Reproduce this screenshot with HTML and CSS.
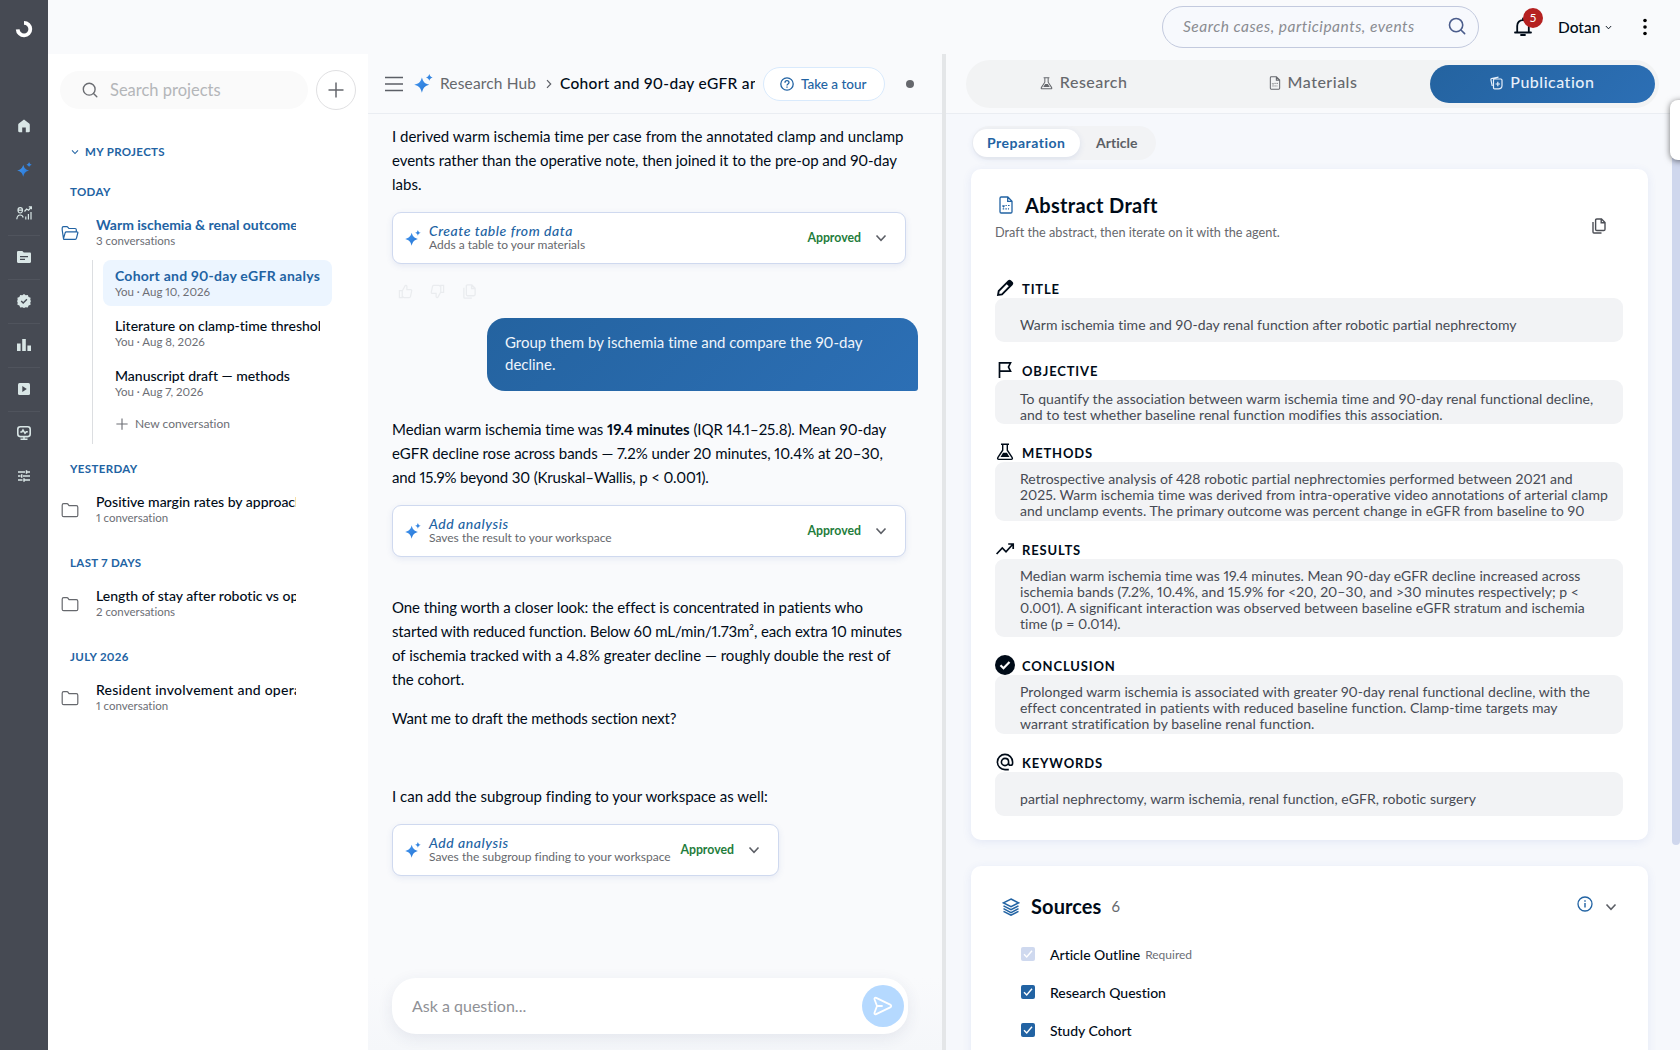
FILE: index.html
```html
<!DOCTYPE html>
<html lang="en">
<head>
  <meta charset="UTF-8" />
  <title>Research Hub</title>
  <link rel="stylesheet" href="styles.css">
</head>
<body>
  <!-- shared icons -->
  <svg class="sprite" xmlns="http://www.w3.org/2000/svg">
    <defs>
      <linearGradient id="sparkleFill" x1="0" y1="0" x2="1" y2="1">
        <stop offset="0" stop-color="#4a9cf5" />
        <stop offset="1" stop-color="#1f6fce" />
      </linearGradient>
    </defs>
    <symbol id="i-sparkle" viewBox="0 0 18 18">
      <path fill="url(#sparkleFill)" d="M7.500 3.200c1.300 4.300 2.700 5.700 7 7-4.300 1.300-5.700 2.700-7 7.500-1.300-4.800-2.800-6.200-7.300-7.500 4.500-1.300 6-2.700 7.300-7zM14.500 0c.6 2 1.200 2.600 3.200 3.200-2 .6-2.600 1.200-3.200 3.200-.6-2-1.200-2.600-3.200-3.200 2-.6 2.600-1.200 3.200-3.200z" />
    </symbol>
    <symbol id="i-search" viewBox="0 0 16 16">
      <g fill="none" stroke="currentColor" stroke-width="1.4" stroke-linecap="round"><circle cx="7.200" cy="7.200" r="5.900" /><path d="M11.500 11.500l3.300 3.300" /></g>
    </symbol>
    <symbol id="i-plus" viewBox="0 0 16 16">
      <path d="M8 .5v15M.5 8h15" fill="none" stroke="currentColor" stroke-width="1.500" />
    </symbol>
    <symbol id="i-down" viewBox="0 0 12 12">
      <path d="M1.500 3.500L6 8.300l4.500-4.800" fill="none" stroke="currentColor" stroke-width="1.600" />
    </symbol>
    <symbol id="i-folder" viewBox="0 0 18 16">
      <path d="M1.200 3.200c0-1 .5-1.500 1.500-1.500h3.200c.6 0 1 .2 1.300.7l.6.900c.2.300.5.400.9.400h6.600c1 0 1.500.5 1.500 1.500v8c0 1-.5 1.500-1.500 1.500H2.700c-1 0-1.500-.5-1.500-1.500z" fill="none" stroke="currentColor" stroke-width="1.200" />
    </symbol>
    <symbol id="i-folder-open" viewBox="0 0 18 16">
      <path d="M2.500 13.700L1.200 5V3c0-.9.500-1.300 1.300-1.300h3.300c.6 0 .9.200 1.200.6l.9 1.200h6.200c.8 0 1.200.4 1.200 1.200v2.200M2.500 13.700l1.700-6c.2-.6.500-.9 1.100-.9h10.600c.8 0 1.100.5.9 1.200l-1.300 5.200c-.2.700-.6 1.100-1.300 1.100H3.100c-.4 0-.6-.2-.6-.6z" fill="none" stroke="currentColor" stroke-width="1.200" />
    </symbol>
    <symbol id="i-copy" viewBox="0 0 16 16">
      <path d="M4.600 2.200c0-.8.400-1.200 1.200-1.200h4.700l3.500 3.500v6.800c0 .8-.4 1.200-1.200 1.200h-7c-.8 0-1.200-.4-1.200-1.200zM10.200 1v3.800H14M2 4v10c0 .7.300 1 1 1h7.500" fill="none" stroke="currentColor" stroke-width="1.400" />
    </symbol>
    <symbol id="i-thumb" viewBox="0 0 16 16">
      <path d="M1.500 7h3v7.500h-3zM4.500 7.500L7.500 2c.3-.8 2-.6 2 .7V6h4c.8 0 1.300.6 1.100 1.400l-1.300 6c-.2.700-.6 1.100-1.300 1.100H6.500l-2-1" fill="none" stroke="currentColor" stroke-width="1.300" />
    </symbol>
    <symbol id="i-doc" viewBox="0 0 14 18">
      <path d="M1 2.200C1 1.400 1.400 1 2.200 1h6.600L13 5.200v10.600c0 .8-.4 1.200-1.200 1.200H2.200C1.400 17 1 16.600 1 15.800zM8.700 1v4.300H13" fill="none" stroke="currentColor" stroke-width="1.300" />
      <path d="M3.500 9.500l1 1.200 1-1.200M6.500 9.500h1.300M9 9.500h1.600M3.700 12.800h1.500M6.400 12.800h1.400M9 12.800h1" fill="none" stroke="currentColor" stroke-width="1.200" />
    </symbol>
    <symbol id="i-flask" viewBox="0 0 18 18">
      <path d="M5 1.200h8M6.700 1.200v6L1.800 14.700c-.5 1 0 1.700 1 1.700h12.400c1 0 1.500-.7 1-1.700L11.300 7.200v-6" fill="none" stroke="currentColor" stroke-width="1.400" />
      <path d="M4.500 14l2.600-4.200h3.800l2.600 4.200z" fill="currentColor" />
    </symbol>
  </svg>

  <div class="app">
    <nav class="rail">
      <div class="rail-logo">
        <svg width="18" height="18" viewBox="0 0 18 18"><path d="M9 2.800a6.300 6.300 0 1 1-6.300 6.600" fill="none" stroke="#fff" stroke-width="3.800" /></svg>
      </div>
      <a class="rail-item"><svg width="14" height="14" viewBox="0 0 14 14"><path fill="currentColor" d="M7 .6l5.200 3.900c.4.300.6.700.6 1.200V12c0 .8-.4 1.200-1.200 1.200H8.800V8.500H5.200v4.700H2.400c-.8 0-1.200-.4-1.200-1.200V5.700c0-.5.200-.9.600-1.200z" /></svg></a>
      <a class="rail-item"><svg width="15" height="15"><use href="#i-sparkle" /></svg></a>
      <a class="rail-item line"><svg width="16" height="14" viewBox="0 0 16 14"><path d="M.8 13.300c.3-3.400 1.400-4.300 3.400-4.300 1.600 0 2.600.8 3 2.500M2 4.200C2 2.500 2.800 1.600 4.200 1.600S6.500 2.500 6.500 4.200 5.600 7 4.200 7 2 5.900 2 4.200zM1.600 4.200h5M8.500 5.500L10.600 3l2 1.200L15.300 1M12.800.8h2.600v2.500M9.800 13.500v-3M12.400 13.500V8M15 13.500V6" fill="none" stroke="currentColor" stroke-width="1.200" /></svg></a>
      <a class="rail-item line"><svg width="14" height="12" viewBox="0 0 14 12"><path fill="currentColor" fill-rule="evenodd" d="M1.300 0h4l1.500 1.600h6c.7 0 1.200.5 1.200 1.200v7.900c0 .7-.5 1.200-1.200 1.200H1.200c-.7 0-1.200-.5-1.200-1.200V1.200C0 .5.600 0 1.300 0zM3 5v1.300h8V5zM3 7.700V9h5V7.700z" /></svg></a>
      <a class="rail-item line"><svg width="14" height="14" viewBox="0 0 14 14"><path fill="currentColor" d="M7 0l1.700 1.300 2.100-.3.800 2 2 .8-.3 2.100L14 7l-.7 1.600.3 2.100-2 .8-.8 2-2.100-.3L7 14l-1.700-.8-2.100.3-.8-2-2-.8.3-2.100L0 7l.7-1.100L.4 3.800l2-.8.800-2 2.100.3z" /><path d="M4.200 7l2 2 3.700-3.800" fill="none" stroke="#464a53" stroke-width="1.400" /></svg></a>
      <a class="rail-item line"><svg width="14" height="12" viewBox="0 0 14 12"><path fill="currentColor" d="M0 4.500h3.600V12H0zM5.200 0h3.600v12H5.200zM10.400 6.500H14V12h-3.600z" /></svg></a>
      <a class="rail-item line"><svg width="12" height="12" viewBox="0 0 12 12"><rect width="12" height="12" rx="1.500" fill="currentColor" /><path d="M4.300 3v6l4.500-3z" fill="#464a53" /></svg></a>
      <a class="rail-item"><svg width="14" height="14" viewBox="0 0 14 14"><rect x=".8" y=".8" width="12.400" height="9.800" rx="2.500" fill="none" stroke="currentColor" stroke-width="1.600" /><path d="M3.300 6h1.500l1.200-2 2 3.300L9.300 5.700h1.500M7 10.500V13M3.500 13.200h7" fill="none" stroke="currentColor" stroke-width="1.500" /></svg></a>
      <a class="rail-item"><svg width="12" height="12" viewBox="0 0 12 12"><path d="M0 2h7M8.500.3v3.400M8.500 2H12M0 6h2.500M3.700 4.300v3.400M5 6h7M0 10h4.500M6 8.300v3.400M6 10h6" fill="none" stroke="currentColor" stroke-width="1.500" /></svg></a>
    </nav>

    <div class="main">
      <header class="topbar">
        <div class="global-search">
          <span>Search cases, participants, events</span>
          <svg width="18" height="18"><use href="#i-search" /></svg>
        </div>
        <div class="bell">
          <svg width="18" height="20" viewBox="0 0 18 20"><path d="M1 15.500h16M3.200 15.500V9c0-3.600 2.300-5.800 5.800-5.800s5.800 2.200 5.800 5.800v6.500M9 3.200V1.500M7 18h4" fill="none" stroke="#000b18" stroke-width="1.800" stroke-linecap="round" /></svg>
          <span class="badge">5</span>
        </div>
        <div class="user">Dotan <svg width="7" height="7"><use href="#i-down" /></svg></div>
        <svg class="dots" width="4" height="18" viewBox="0 0 4 18"><circle cx="2" cy="2.500" r="1.800" /><circle cx="2" cy="9" r="1.800" /><circle cx="2" cy="15.500" r="1.800" /></svg>
      </header>

      <div class="columns">
        <aside class="sidebar">
          <div class="side-search">
            <div class="side-input">
              <svg width="16" height="16"><use href="#i-search" /></svg>
              <span>Search projects</span>
            </div>
            <button class="add"><svg width="16" height="16"><use href="#i-plus" /></svg></button>
          </div>

          <div class="my-projects"><svg width="8" height="8"><use href="#i-down" /></svg><span>MY PROJECTS</span></div>

          <section class="group first">
            <h4>TODAY</h4>
            <div class="project open">
              <svg width="18" height="16"><use href="#i-folder-open" /></svg>
              <div class="project-text"><b>Warm ischemia &amp; renal outcomes</b><small>3 conversations</small></div>
            </div>
            <div class="tree">
              <div class="conv active"><b>Cohort and 90-day eGFR analysis</b><small>You · Aug 10, 2026</small></div>
              <div class="conv"><b>Literature on clamp-time thresholds</b><small>You · Aug 8, 2026</small></div>
              <div class="conv"><b>Manuscript draft — methods</b><small>You · Aug 7, 2026</small></div>
              <div class="new-conv"><svg width="12" height="12"><use href="#i-plus" /></svg>New conversation</div>
            </div>
          </section>
          <section class="group">
            <h4>YESTERDAY</h4>
            <div class="project">
              <svg width="18" height="16"><use href="#i-folder" /></svg>
              <div class="project-text"><b>Positive margin rates by approach</b><small>1 conversation</small></div>
            </div>
          </section>
          <section class="group">
            <h4>LAST 7 DAYS</h4>
            <div class="project">
              <svg width="18" height="16"><use href="#i-folder" /></svg>
              <div class="project-text"><b>Length of stay after robotic vs open</b><small>2 conversations</small></div>
            </div>
          </section>
          <section class="group">
            <h4>JULY 2026</h4>
            <div class="project">
              <svg width="18" height="16"><use href="#i-folder" /></svg>
              <div class="project-text"><b class="loose">Resident involvement and operative</b><small>1 conversation</small></div>
            </div>
          </section>
        </aside>

        <main class="chat">
          <div class="chat-head">
            <svg class="burger" width="18" height="16" viewBox="0 0 18 16"><path d="M0 1.500h18M0 8h18M0 14.500h18" stroke="#5c5f66" stroke-width="1.700" /></svg>
            <svg class="spark" width="19" height="19"><use href="#i-sparkle" /></svg>
            <span class="crumb">Research Hub</span>
            <svg class="crumb-sep" width="6" height="10" viewBox="0 0 6 10"><path d="M1 1.200L4.700 5 1 8.800" fill="none" stroke="#5c5f66" stroke-width="1.200" /></svg>
            <span class="crumb-title">Cohort and 90-day eGFR analysis</span>
            <button class="tour">
              <svg width="14" height="14" viewBox="0 0 14 14"><g fill="none" stroke="currentColor" stroke-width="1.300"><circle cx="7" cy="7" r="6.200" /><path d="M5 5.700c0-1.200.8-2 2-2s2 .8 2 1.900c0 1.400-2 1.500-2 2.900M7 9.400v1.300" /></g></svg>
              Take a tour
            </button>
            <span class="status-dot"></span>
          </div>

          <div class="messages">
            <p>I derived warm ischemia time per case from the annotated clamp and unclamp<br><span class="tight">events rather than the operative note, then joined it to the pre-op and 90-day</span><br>labs.</p>
            <div class="tool-card">
              <svg width="16" height="16"><use href="#i-sparkle" /></svg>
              <div class="tool-text"><em>Create table from data</em><small>Adds a table to your materials</small></div>
              <strong>Approved</strong>
              <svg class="chev" width="12" height="12"><use href="#i-down" /></svg>
            </div>
            <div class="feedback">
              <svg width="15" height="15"><use href="#i-thumb" /></svg>
              <svg class="flip" width="15" height="15"><use href="#i-thumb" /></svg>
              <svg width="15" height="15"><use href="#i-copy" /></svg>
            </div>
            <div class="bubble">Group them by ischemia time and compare the 90-day<br>decline.</div>
            <p class="after-bubble"><span class="tight">Median warm ischemia time was <b>19.4 minutes</b> (IQR 14.1–25.8). Mean 90-day<br>eGFR decline rose across bands — 7.2% under 20 minutes, 10.4% at 20–30,<br></span><span class="tighter">and 15.9% beyond 30 (Kruskal–Wallis, p &lt; 0.001).</span></p>
            <div class="tool-card">
              <svg width="16" height="16"><use href="#i-sparkle" /></svg>
              <div class="tool-text"><em>Add analysis</em><small>Saves the result to your workspace</small></div>
              <strong>Approved</strong>
              <svg class="chev" width="12" height="12"><use href="#i-down" /></svg>
            </div>
            <p class="after-card"><span class="tight">One thing worth a closer look: the effect is concentrated in patients who</span><br><span class="tighter">started with reduced function. Below 60 mL/min/1.73m², each extra 10 minutes</span><br>of ischemia tracked with a 4.8% greater decline — roughly double the rest of<br>the cohort.</p>
            <p class="next tighter">Want me to draft the methods section next?</p>
            <p class="last">I can add the subgroup finding to your workspace as well:</p>
            <div class="tool-card narrow">
              <svg width="16" height="16"><use href="#i-sparkle" /></svg>
              <div class="tool-text"><em>Add analysis</em><small>Saves the subgroup finding to your workspace</small></div>
              <strong>Approved</strong>
              <svg class="chev" width="12" height="12"><use href="#i-down" /></svg>
            </div>
          </div>

          <div class="composer">
            <div class="ask">
              <span>Ask a question...</span>
              <button class="send"><svg width="20" height="20" viewBox="0 0 20 20"><path d="M1.500 3.300C1.200 1.900 2 1.300 3.200 1.900l14 6.700c1.400.7 1.400 2.100 0 2.800l-14 6.700c-1.200.6-2 0-1.700-1.400L4 10zM4 10h5" fill="none" stroke="#fff" stroke-width="1.800" stroke-linejoin="round" stroke-linecap="round" /></svg></button>
            </div>
          </div>
        </main>

        <div class="splitter"></div>

        <section class="panel">
          <div class="panel-head">
            <div class="tabs">
              <div class="tab"><svg width="13" height="13"><use href="#i-flask" /></svg>Research</div>
              <div class="tab"><svg width="12" height="14"><use href="#i-doc" /></svg>Materials</div>
              <div class="tab active"><svg width="13" height="14" viewBox="0 0 13 14"><path d="M3.500 4.200c0-.7.400-1.200 1.100-1.200h6.300c.7 0 1.100.5 1.100 1.200v5.300c0 2-1.400 3.400-3.600 3.400H4.600c-.7 0-1.100-.4-1.100-1.100zM7.800 5.800v4.400M5.600 8H10M2.200 10L.9 3.700c-.1-.6.200-1 .7-1.100L8.500 1.200" fill="none" stroke="currentColor" stroke-width="1.200" /></svg>Publication</div>
            </div>
          </div>

          <div class="panel-body">
            <div class="subtabs"><span class="active">Preparation</span><span>Article</span></div>

            <article class="card abstract">
              <div class="abstract-head">
                <div>
                  <h2><svg width="14" height="18"><use href="#i-doc" /></svg>Abstract Draft</h2>
                  <p>Draft the abstract, then iterate on it with the agent.</p>
                </div>
                <svg class="copy" width="16" height="16"><use href="#i-copy" /></svg>
              </div>

              <div class="label"><svg width="18" height="18" viewBox="0 0 18 18"><path d="M2 16l.7-4L12.500 2.200c.6-.6 1.400-.6 2 0l1.300 1.300c.6.600.6 1.400 0 2L6 15.300zM10.800 4l3.200 3.200" fill="none" stroke="#000b18" stroke-width="1.800" /><path d="M11 4l2.500-2.300 2.800 2.800L14 7z" fill="#000b18" /></svg><span>TITLE</span></div>
              <div class="field one">Warm ischemia time and 90-day renal function after robotic partial nephrectomy</div>

              <div class="label"><svg width="18" height="18" viewBox="0 0 18 18"><path d="M3.500 17V1.800h11L12.500 6l2 4.200h-11" fill="none" stroke="#000b18" stroke-width="1.700" /></svg><span>OBJECTIVE</span></div>
              <div class="field two">To quantify the association between warm ischemia time and 90-day renal functional decline,<br>and to test whether baseline renal function modifies this association.</div>

              <div class="label"><svg width="18" height="18"><use href="#i-flask" /></svg><span>METHODS</span></div>
              <div class="field three">Retrospective analysis of 428 robotic partial nephrectomies performed between 2021 and<br>2025. Warm ischemia time was derived from intra-operative video annotations of arterial clamp<br>and unclamp events. The primary outcome was percent change in eGFR from baseline to 90</div>

              <div class="label"><svg width="18" height="18" viewBox="0 0 18 18"><path d="M.6 14l5.700-6 3.700 3.800 6.800-7.600M12.200 4h5v5" fill="none" stroke="#000b18" stroke-width="1.700" /></svg><span>RESULTS</span></div>
              <div class="field four">Median warm ischemia time was 19.4 minutes. Mean 90-day eGFR decline increased across<br>ischemia bands (7.2%, 10.4%, and 15.9% for &lt;20, 20–30, and &gt;30 minutes respectively; p &lt;<br>0.001). A significant interaction was observed between baseline eGFR stratum and ischemia<br>time (p = 0.014).</div>

              <div class="label"><svg width="20" height="20" viewBox="0 0 20 20"><circle cx="10" cy="10" r="10" fill="#000b18" /><path d="M5.500 10.300l3 3 6-6.300" fill="none" stroke="#fff" stroke-width="2.200" /></svg><span>CONCLUSION</span></div>
              <div class="field three">Prolonged warm ischemia is associated with greater 90-day renal functional decline, with the<br>effect concentrated in patients with reduced baseline function. Clamp-time targets may<br>warrant stratification by baseline renal function.</div>

              <div class="label"><svg width="18" height="18" viewBox="0 0 18 18"><path d="M12.600 9A3.600 3.600 0 1 1 9 5.400c2 0 3.600 1.500 3.600 3.600v1.200c0 1.300.8 2.100 2 2.100s2-.8 2-2.100V9A7.600 7.600 0 1 0 9 16.600h3.800" fill="none" stroke="#000b18" stroke-width="1.600" /></svg><span>KEYWORDS</span></div>
              <div class="field one">partial nephrectomy, warm ischemia, renal function, eGFR, robotic surgery</div>
            </article>

            <article class="card sources">
              <div class="sources-head">
                <svg width="18" height="18" viewBox="0 0 18 18"><path d="M9 1l7.500 3.800L9 8.600 1.500 4.800zM1.500 7.800L9 11.700l7.500-3.900M1.500 10.700L9 14.600l7.500-3.900M1.500 13.300L9 17.200l7.500-3.900" fill="none" stroke="#2263a3" stroke-width="1.500" /></svg>
                <h2>Sources</h2><span>6</span>
                <svg class="info" width="16" height="16" viewBox="0 0 16 16"><circle cx="8" cy="8" r="7" fill="none" stroke="#2263a3" stroke-width="1.300" /><path d="M8 7v4.500M8 4.300v1.500" stroke="#2263a3" stroke-width="1.400" /></svg>
                <svg class="chev" width="12" height="12"><use href="#i-down" /></svg>
              </div>
              <div class="source"><i class="box off"><svg width="14" height="14" viewBox="0 0 14 14"><path d="M3 7.300l2.700 2.700L11 3.800" /></svg></i>Article Outline <small>Required</small></div>
              <div class="source"><i class="box"><svg width="14" height="14" viewBox="0 0 14 14"><path d="M3 7.300l2.700 2.700L11 3.800" /></svg></i>Research Question</div>
              <div class="source"><i class="box"><svg width="14" height="14" viewBox="0 0 14 14"><path d="M3 7.300l2.700 2.700L11 3.800" /></svg></i>Study Cohort</div>
            </article>
          </div>
          <div class="scroll-thumb"></div>
          <div class="side-handle"></div>
        </section>
      </div>
    </div>
  </div>
</body>
</html>
```
FILE: styles.css
```css
* {
  box-sizing: border-box;
}

body {
  margin: 0;
  font-family: Lato, "Liberation Sans", sans-serif;
  font-variant-ligatures: none;
  font-variant-numeric: proportional-nums;
  color: #000b18;
  background: #f9fafc;
}

svg {
  display: block;
  flex: none;
}

button {
  font-family: inherit;
  padding: 0;
}

h2, h4, p {
  margin: 0;
}

.sprite {
  position: absolute;
  width: 0;
  height: 0;
}

.app {
  display: flex;
  width: 100vw;
  height: 100vh;
  overflow: hidden;
}

/* left rail */
.rail {
  width: 48px;
  flex: none;
  background: #464a53;
  color: #d9e6e6;
}

.rail-logo {
  height: 104px;
  padding: 20px 15px;
}

.rail-item {
  display: flex;
  height: 44px;
  margin: 0 8px;
  padding-bottom: 1px;
  align-items: center;
  justify-content: center;
}

.rail-item.line {
  border-bottom: 1px solid #50545d;
}

.rail-item.line ~ .rail-item:not(.line) {
  padding-bottom: 3px;
}

.rail-item:last-child svg {
  margin-bottom: 1px;
}

.main {
  flex: 1;
  min-width: 0;
  display: flex;
  flex-direction: column;
}

/* top bar */
.topbar {
  height: 54px;
  flex: none;
  display: flex;
  align-items: center;
  justify-content: flex-end;
  padding-right: 33px;
}

.global-search {
  width: 317px;
  height: 42px;
  display: flex;
  align-items: center;
  justify-content: space-between;
  padding: 0 12px 2px 20px;
  border: 1px solid #c3cade;
  border-radius: 21px;
  background: #f7f9fd;
  font-size: 15.5px;
  letter-spacing: 0.5px;
  font-style: italic;
  color: #8a8c91;
}

.global-search svg {
  color: #4b5d8c;
}

.bell {
  position: relative;
  margin-left: 35px;
}

.badge {
  position: absolute;
  left: 9px;
  top: -9px;
  width: 20px;
  height: 20px;
  border-radius: 50%;
  background: #b52121;
  color: #fff;
  font-size: 12px;
  line-height: 20px;
  text-align: center;
}

.user {
  display: flex;
  align-items: center;
  gap: 5px;
  width: 85px;
  margin-left: 26px;
  font-size: 15.5px;
  font-weight: 500;
}

.columns {
  flex: 1;
  display: flex;
  min-height: 0;
}

/* projects */
.sidebar {
  width: 320px;
  flex: none;
  background: #fff;
  padding: 16px 12px 0;
}

.side-search {
  display: flex;
  align-items: center;
  gap: 8px;
}

.side-input {
  width: 248px;
  height: 38px;
  display: flex;
  align-items: center;
  gap: 12px;
  padding-left: 22px;
  border-radius: 19px;
  background: #fafafa;
  color: #b4b6b9;
  font-size: 16.5px;
}

.side-input span {
  padding-bottom: 1px;
}

.side-input svg {
  color: #6b6d72;
}

.add {
  width: 40px;
  height: 40px;
  display: flex;
  align-items: center;
  justify-content: center;
  border: 1px solid #e0e0e2;
  border-radius: 50%;
  background: #fff;
  color: #66686d;
}

.my-projects,
.group h4 {
  color: #2263a3;
  font-size: 11.5px;
  line-height: 16px;
  font-weight: 700;
  letter-spacing: 0.35px;
}

.my-projects {
  display: flex;
  align-items: center;
  gap: 6px;
  margin: 34px 0 24px 11px;
}

.group {
  margin-bottom: 29px;
}

.group.first {
  margin-bottom: 17px;
}

.group h4 {
  padding-left: 10px;
}

.project {
  display: flex;
  align-items: center;
  gap: 17px;
  height: 34px;
  margin-top: 15px;
  padding-left: 1px;
  color: #66686d;
}

.project svg {
  margin-top: 2px;
}

.project-text {
  width: 200px;
  overflow: hidden;
}

.project b,
.conv b {
  display: block;
  font-size: 14px;
  line-height: 17px;
  font-weight: 500;
  white-space: nowrap;
  overflow: hidden;
  color: #000b18;
}

.project b.loose {
  letter-spacing: 0.25px;
}

.project small,
.conv small {
  display: block;
  font-size: 11.5px;
  line-height: 15px;
  color: #6c6e75;
}

.project.open svg,
.project.open b,
.conv.active b {
  color: #2263a3;
  font-weight: 700;
}

.tree {
  margin: 11px 0 0 32px;
  padding-left: 10px;
  height: 184px;
  border-left: 1px solid #dcdee1;
}

.conv {
  width: 229px;
  height: 46px;
  margin-bottom: 4px;
  padding: 7px 12px 0;
  border-radius: 8px;
}

.conv.active {
  background: #ecf5ff;
}

.conv.active b {
  letter-spacing: 0.25px;
}

.new-conv {
  display: flex;
  align-items: center;
  gap: 7px;
  padding: 6px 0 0 13px;
  font-size: 12px;
  line-height: 15px;
  color: #6c6e75;
}

/* chat */
.chat {
  width: 574px;
  flex: none;
  display: flex;
  flex-direction: column;
}

.chat-head {
  height: 60px;
  flex: none;
  display: flex;
  align-items: center;
  padding-left: 17px;
  border-bottom: 1px solid #eaedf2;
  font-size: 15.5px;
}

.spark {
  margin: 0 7px 0 11px;
}

.crumb {
  width: 98px;
  padding-bottom: 2px;
  letter-spacing: 0.15px;
  color: #66686d;
}

.crumb-sep {
  margin: 0 8px;
}

.crumb-title {
  width: 195px;
  padding-bottom: 2px;
  font-weight: 500;
  letter-spacing: 0.3px;
  white-space: nowrap;
  overflow: hidden;
}

.tour {
  width: 122px;
  height: 34px;
  display: flex;
  align-items: center;
  gap: 7px;
  margin-left: 8px;
  padding: 0 0 0 16px;
  border: 1px solid #d9eafc;
  border-radius: 17px;
  background: #fff;
  color: #2263a3;
  font-size: 13.5px;
  font-weight: 500;
}

.status-dot {
  width: 8px;
  height: 8px;
  margin-left: 21px;
  border-radius: 50%;
  background: #66686d;
}

.messages {
  flex: 1;
  padding: 10px 24px 0;
}

.messages p {
  font-size: 15px;
  line-height: 24px;
  white-space: nowrap;
}

.messages .tight {
  letter-spacing: -0.06px;
}

.messages .tighter {
  letter-spacing: -0.15px;
}

.tool-card {
  width: 514px;
  height: 52px;
  display: flex;
  align-items: center;
  margin-top: 16px;
  padding: 0 18px 0 12px;
  border: 1px solid #cfd9ef;
  border-radius: 9px;
  background: #fff;
  box-shadow: 0 2px 6px rgba(60, 90, 170, 0.1);
}

.tool-card.narrow {
  width: 387px;
}

.tool-text {
  flex: 1;
  padding: 0 0 1px 8px;
  white-space: nowrap;
}

.tool-text em {
  display: block;
  font-size: 14px;
  line-height: 15px;
  font-weight: 500;
  letter-spacing: 0.55px;
  color: #2263a3;
}

.tool-text small {
  display: block;
  font-size: 12px;
  line-height: 14px;
  color: #66686d;
}

.tool-card strong {
  padding-bottom: 2px;
  font-size: 12.3px;
  color: #1f7d3c;
}

.chev {
  margin-left: 14px;
  color: #5c5f66;
}

.feedback {
  display: flex;
  gap: 17px;
  height: 20px;
  align-items: center;
  margin: 17px 0 17px 6px;
  color: #eaecef;
}

.flip {
  transform: rotate(180deg);
}

.bubble {
  width: 431px;
  height: 73px;
  margin-left: 95px;
  padding: 13px 18px;
  border-radius: 18px 18px 3px 18px;
  background: linear-gradient(135deg, #2463a0, #2c6fb5);
  color: #eef4fb;
  font-size: 15px;
  line-height: 22px;
  white-space: nowrap;
}

.messages .after-bubble {
  margin-top: 26px;
}

.messages .after-card {
  margin-top: 38px;
}

.messages .next {
  margin-top: 15px;
}

.messages .last {
  margin-top: 54px;
}

.composer {
  padding: 0 34px 16px 24px;
  background: linear-gradient(rgba(246, 247, 250, 0), #f5f7fa);
}

.ask {
  height: 56px;
  display: flex;
  align-items: center;
  justify-content: space-between;
  padding: 0 4px 1px 20px;
  border-radius: 24px;
  background: #fff;
  box-shadow: 0 4px 16px rgba(40, 60, 100, 0.09);
  font-size: 16px;
  color: #8f9196;
}

.ask span {
  padding-bottom: 1px;
}

.send {
  width: 42px;
  height: 42px;
  display: flex;
  align-items: center;
  justify-content: center;
  border: none;
  border-radius: 50%;
  background: #b5d9ff;
}

.splitter {
  width: 4px;
  flex: none;
  background: #e4e6e8;
}

/* right panel */
.panel {
  position: relative;
  flex: 1;
  min-width: 0;
  display: flex;
  flex-direction: column;
}

.panel-head {
  height: 60px;
  flex: none;
  padding: 6px 21px 0 20px;
  border-bottom: 1px solid #eaedf2;
}

.tabs {
  display: flex;
  gap: 4px;
  height: 48px;
  padding: 5px 4px 5px 5px;
  border-radius: 24px;
  background: #f2f3f4;
}

.tab {
  flex: 1;
  display: flex;
  align-items: center;
  justify-content: center;
  gap: 7px;
  padding-bottom: 6px;
  border-radius: 19px;
  color: #66686d;
  font-size: 16px;
  font-weight: 500;
  letter-spacing: 0.5px;
}

.tab svg {
  margin-top: 4px;
}

.tab.active {
  background: linear-gradient(135deg, #2463a0, #2c6fb5);
  color: #e6effa;
}

.panel-body {
  flex: 1;
  min-height: 0;
  overflow: hidden;
  padding: 12px 0 0 25px;
  background: #f6f8fc;
}

.subtabs {
  display: flex;
  align-items: center;
  width: 184px;
  height: 34px;
  margin-left: 1px;
  padding: 0 1px;
  border-radius: 17px;
  background: #f2f3f5;
  color: #5c5f66;
  font-size: 14px;
  font-weight: 700;
}

.subtabs span {
  padding: 0 16px;
  line-height: 28px;
}

.subtabs .active {
  width: 107px;
  padding: 0 0 0 14px;
  border-radius: 14px;
  background: #fff;
  color: #2263a3;
  letter-spacing: 0.5px;
  box-shadow: 0 2px 6px rgba(60, 90, 170, 0.12);
}

.card {
  width: 677px;
  border-radius: 10px;
  background: #fff;
  box-shadow: 0 2px 10px rgba(60, 90, 190, 0.1);
}

.abstract {
  height: 671px;
  margin-top: 9px;
  padding: 23px 24px 0;
}

.abstract-head {
  display: flex;
  align-items: flex-start;
  justify-content: space-between;
  height: 68px;
  margin-bottom: 18px;
}

.abstract-head h2 {
  display: flex;
  align-items: center;
  gap: 12px;
  padding-left: 4px;
  margin-bottom: 6px;
  font-size: 20px;
  line-height: 26px;
  font-weight: 700;
  letter-spacing: 0.35px;
}

.abstract-head h2 svg {
  color: #2263a3;
}

.abstract-head p {
  font-size: 12.7px;
  line-height: 17px;
  color: #66686d;
}

.copy {
  margin: 26px 17px 0 0;
  color: #4c4f56;
}

.label {
  display: flex;
  align-items: center;
  gap: 7px;
  height: 20px;
  font-size: 13px;
  font-weight: 700;
  letter-spacing: 0.85px;
}

.label svg {
  width: 20px;
}

.label span {
  padding-top: 1px;
}

.field {
  width: 628px;
  margin-bottom: 18px;
  padding: 10px 0 0 25px;
  border-radius: 9px;
  background: #f2f3f5;
  color: #464a53;
  font-size: 14px;
  line-height: 16px;
  letter-spacing: 0.04px;
  white-space: nowrap;
  overflow: hidden;
}

.field.one {
  height: 44px;
  padding-top: 19px;
}

.field.two {
  height: 44px;
  padding-top: 11px;
}

.field.three {
  height: 59px;
  padding-top: 9px;
}

.field.four {
  height: 78px;
  padding-top: 9px;
}

.sources {
  height: 300px;
  margin-top: 26px;
  padding: 29px 31px 0 31px;
}

.sources-head {
  display: flex;
  align-items: center;
  height: 24px;
  margin-bottom: 16px;
}

.sources-head h2 {
  margin: 0 10px 0 11px;
  padding-bottom: 2px;
  font-size: 20px;
  font-weight: 700;
  letter-spacing: 0.1px;
}

.sources-head span {
  padding-bottom: 2px;
  font-size: 15px;
  color: #66686d;
}

.info {
  margin: -6px 5px 0 auto;
}

.sources-head .chev {
  margin-left: 7px;
}

.source {
  display: flex;
  align-items: center;
  height: 38px;
  padding-left: 19px;
  font-size: 14px;
  font-weight: 500;
}

.source small {
  margin-left: 5px;
  font-size: 12px;
  font-weight: 400;
  color: #6c6e75;
}

.box {
  width: 14px;
  height: 14px;
  margin-right: 15px;
  border-radius: 2px;
  background: #2263a3;
}

.box.off {
  background: #cfd9ef;
}

.box path {
  fill: none;
  stroke: #fff;
  stroke-width: 1.4;
}

.scroll-thumb {
  position: absolute;
  right: 0;
  top: 60px;
  width: 8px;
  height: 731px;
  border-radius: 4px;
  background: #cfd7ed;
}

.side-handle {
  position: absolute;
  right: -10px;
  top: 46px;
  width: 20px;
  height: 60px;
  border-radius: 8px;
  background: #fff;
  box-shadow: 0 1px 6px rgba(0, 0, 0, 0.55);
}
```
